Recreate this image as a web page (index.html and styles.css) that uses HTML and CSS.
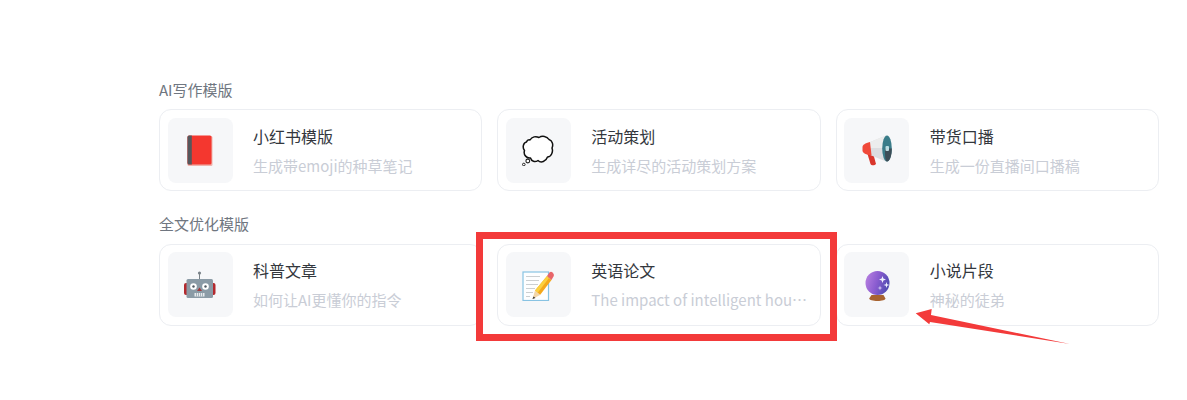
FILE: index.html
```html
<!DOCTYPE html>
<html lang="zh-CN">
<head>
<meta charset="utf-8">
<title>AI写作模版</title>
<link rel="stylesheet" href="styles.css">
</head>
<body>
<main class="page">
  <section class="group">
    <h2 class="group-title">AI写作模版</h2>
    <div class="cards">
      <article class="card">
        <div class="icon-box">
          <svg class="icon" viewBox="0 0 32 32">
            <rect x="3.500" y="2" width="25" height="30" rx="1.500" fill="#f0b3ac"/>
            <rect x="3.500" y="1.500" width="24" height="29" rx="1.500" fill="#f4372f"/>
            <path d="M5 1.500H7.800V30.500H5A1.500 1.500 0 0 1 3.500 29V3A1.500 1.500 0 0 1 5 1.500Z" fill="#55575c"/>
          </svg>
        </div>
        <div class="text"><div class="title">小红书模版</div><div class="desc">生成带emoji的种草笔记</div></div>
      </article>
      <article class="card">
        <div class="icon-box">
          <svg class="icon" viewBox="0 0 32 32">
            <path d="M8 6C10 2.500 14 2 17 3.500C20 1.500 25 2 27 5.500C30.500 6.500 31.500 11 30 14C31.500 18 29 23 25.500 23C24 27.500 19 29.500 16 26.500C13 28.500 9.500 27.500 8.500 24C5 24.500 1 21 2.500 16.500C0 13.500 1.500 8.500 4.500 8C5 6.500 6.500 5.500 8 6Z" fill="#fff" stroke="#111" stroke-width="1.500" stroke-linejoin="round"/>
            <circle cx="5.800" cy="27" r="1.900" fill="#fff" stroke="#222" stroke-width="1.100"/>
            <circle cx="1.800" cy="30.500" r="1.300" fill="#fff" stroke="#222" stroke-width="1"/>
          </svg>
        </div>
        <div class="text"><div class="title">活动策划</div><div class="desc">生成详尽的活动策划方案</div></div>
      </article>
      <article class="card">
        <div class="icon-box">
          <svg class="icon" viewBox="0 0 32 32">
            <path d="M6.500 20L12 19L15 30C13.500 32 10 31.500 9.500 30Z" fill="#d9362c"/>
            <path d="M8 8.500L25 1.500V27.500L8 20.500Z" fill="#dcdde0"/>
            <path d="M8 8.500L25 1.500V14L8 14Z" fill="#eceded"/>
            <path d="M1.500 13C1.500 11 4 9 9 8L10.500 21C5 21 1.500 19 1.500 16.500Z" fill="#f0493a"/>
            <ellipse cx="26" cy="14.500" rx="4.800" ry="13" fill="#3a7c89"/>
            <path d="M26 27.500C28.700 27.500 30.800 22 30.800 14.500H24C24 21 24 27.500 26 27.500Z" fill="#3c4d57"/>
            <rect x="24.500" y="12" width="3.500" height="5" rx="1" fill="#bcdde2"/>
          </svg>
        </div>
        <div class="text"><div class="title">带货口播</div><div class="desc">生成一份直播间口播稿</div></div>
      </article>
    </div>
  </section>
  <section class="group">
    <h2 class="group-title">全文优化模版</h2>
    <div class="cards">
      <article class="card">
        <div class="icon-box">
          <svg class="icon" viewBox="0 0 32 32">
            <circle cx="15.500" cy="4" r="1.600" fill="#7a8288"/>
            <rect x="15" y="4.500" width="1" height="6" fill="#7a8288"/>
            <rect x="0" y="14" width="5" height="12" rx="2" fill="#b3292e"/>
            <rect x="26.500" y="14" width="5" height="12" rx="2" fill="#b3292e"/>
            <rect x="2.500" y="10" width="26.500" height="19" rx="1.500" fill="#8b9ba6"/>
            <circle cx="9.500" cy="17.500" r="3.300" fill="#fff"/>
            <circle cx="21.500" cy="17.500" r="3.300" fill="#fff"/>
            <circle cx="9.500" cy="17.500" r="1.200" fill="#4d5860"/>
            <circle cx="21.500" cy="17.500" r="1.200" fill="#4d5860"/>
            <path d="M15.500 18.500L18 22H13Z" fill="#a33a3c"/>
            <path d="M10.500 24H20.500V27.500H10.500Z" fill="#e6eaed"/>
            <path d="M12.500 24V27.500M14.500 24V27.500M16.500 24V27.500M18.500 24V27.500" stroke="#8b9ba6" stroke-width=".7"/>
          </svg>
        </div>
        <div class="text"><div class="title">科普文章</div><div class="desc">如何让AI更懂你的指令</div></div>
      </article>
      <article class="card">
        <div class="icon-box">
          <svg class="icon" viewBox="0 0 32 32">
            <rect x="1" y="3" width="25.500" height="28.500" fill="#fdfeff" stroke="#88c3e3" stroke-width="1.200"/>
            <path d="M4 7.500H18M4 11.500H17M4 15.500H16M4 19.500H13M4 23.500H11M4 27.500H8" stroke="#c5c9cc" stroke-width=".9"/>
            <path d="M25 7L29.500 11L18 26L13 21.500Z" fill="#f4a81c"/>
            <path d="M25 7L27 9L15.500 24L13 21.500Z" fill="#fbd03f"/>
            <path d="M13 21.500L18 26L10.500 30Z" fill="#f2d5a8"/>
            <path d="M11.500 27.500L13.500 29L10.500 30Z" fill="#333"/>
            <path d="M25 7L27.500 3.500C28.500 2.500 29.500 2.500 30.500 3.500L31.500 4.800C32 5.800 32 6.500 31.500 7.500L29.500 11Z" fill="#e8656a"/>
          </svg>
        </div>
        <div class="text"><div class="title">英语论文</div><div class="desc">The impact of intelligent household appliances</div></div>
      </article>
      <article class="card">
        <div class="icon-box">
          <svg class="icon" viewBox="0 0 32 32">
            <defs>
              <linearGradient id="orb" x1="0" y1=".2" x2="1" y2=".5">
                <stop offset="0" stop-color="#b77fe0"/>
                <stop offset=".5" stop-color="#8a5cd0"/>
                <stop offset="1" stop-color="#4f4cb0"/>
              </linearGradient>
            </defs>
            <circle cx="16.500" cy="14" r="12" fill="url(#orb)"/>
            <path d="M21.500 7L22.400 9.600L25 10.500L22.400 11.400L21.500 14L20.600 11.400L18 10.500L20.600 9.600Z" fill="#eef0ff"/>
            <path d="M25.500 13L26.200 15.300L28.500 16L26.200 16.700L25.500 19L24.800 16.700L22.500 16L24.800 15.300Z" fill="#eef0ff"/>
            <path d="M19 16.500L19.600 18.400L21.500 19L19.600 19.600L19 21.500L18.400 19.600L16.500 19L18.400 18.400Z" fill="#d9ccf5"/>
            <path d="M10.500 26H22.500L24.500 29.500C24.500 31 21 32 16.500 32C12 32 8.200 31 8.200 29.500Z" fill="#a7622f"/>
          </svg>
        </div>
        <div class="text"><div class="title">小说片段</div><div class="desc">神秘的徒弟</div></div>
      </article>
    </div>
  </section>
</main>
<div class="highlight"></div>
<svg class="arrow" viewBox="0 0 160 40">
  <path d="M1.700 5.300L17.700 1L17 7L156 36L16 14L15.300 16.300Z" fill="#f33a3a"/>
</svg>
</body>
</html>
```
FILE: styles.css
```css
* {
  box-sizing: border-box;
}

html,
body {
  margin: 0;
  background: #fff;
  overflow: hidden;
}

body {
  height: 400px;
  position: relative;
  font-family: "Noto Sans CJK SC", "Noto Sans", sans-serif;
}

.page {
  display: flex;
  flex-direction: column;
  gap: 21.8px;
  width: 1000px;
  margin-left: 159px;
  padding-top: 79px;
}

.group-title {
  margin: 0 0 8.4px;
  font-size: 15px;
  font-weight: 400;
  line-height: 22px;
  color: #6f7680;
}

.cards {
  display: grid;
  grid-template-columns: repeat(3, 1fr);
  gap: 15px;
}

.card {
  display: flex;
  align-items: center;
  gap: 20.5px;
  height: 82px;
  padding: 8px 8px 8px 7.5px;
  background: #fff;
  border: 1px solid #eceef2;
  border-radius: 12px;
  min-width: 0;
}

.icon-box {
  display: flex;
  flex: none;
  align-items: center;
  justify-content: center;
  width: 65px;
  height: 65px;
  background: #f6f7f9;
  border-radius: 8px;
}

.icon {
  display: block;
  width: 32px;
  height: 32px;
}

.text {
  display: flex;
  flex-direction: column;
  gap: 8px;
  flex: 1;
  min-width: 0;
  padding-top: 0.4px;
  padding-right: 3px;
}

.title {
  font-size: 16px;
  line-height: 22px;
  color: #33373d;
}

.desc {
  overflow: hidden;
  font-size: 15px;
  line-height: 22px;
  color: #c9cdd6;
  white-space: nowrap;
  text-overflow: ellipsis;
}

.highlight {
  position: absolute;
  left: 476px;
  top: 232px;
  width: 361px;
  height: 109px;
  border: 7px solid #f33a3a;
}

.arrow {
  position: absolute;
  left: 914px;
  top: 308px;
  width: 160px;
  height: 40px;
}
```
